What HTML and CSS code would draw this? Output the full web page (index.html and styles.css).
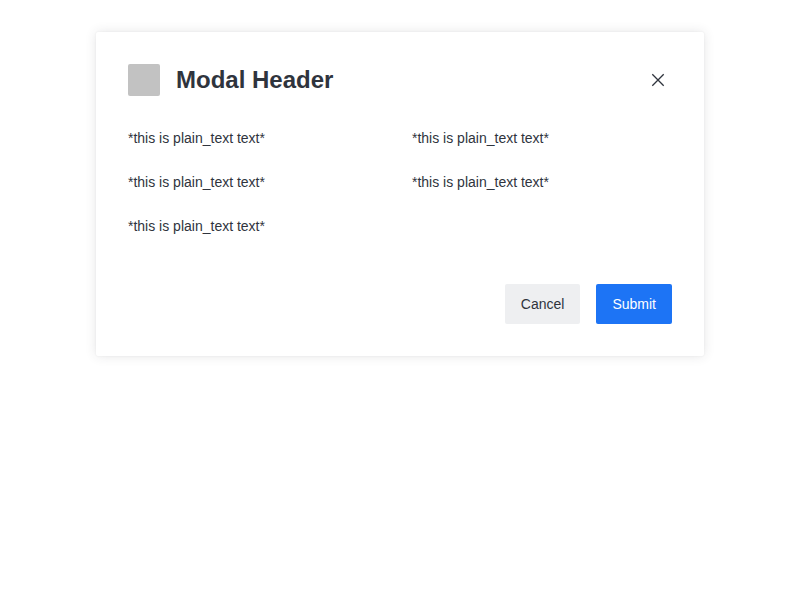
FILE: index.html
```
<!DOCTYPE html>
<html lang="en">
<head>
<meta charset="utf-8">
<title>Modal</title>
<link rel="stylesheet" href="styles.css">
</head>
<body>
<section class="modal" role="dialog" aria-labelledby="modal-title">
  <header class="modal-header">
    <span class="modal-thumb"></span>
    <h1 class="modal-title" id="modal-title">Modal Header</h1>
    <button class="modal-close" type="button" aria-label="Close">
      <svg class="icon" viewBox="0 0 28 28" aria-hidden="true"><path d="M8.3 8.3l11.4 11.4M19.7 8.3L8.3 19.7"/></svg>
    </button>
  </header>
  <div class="fields">
    <div>*this is plain_text text*</div>
    <div>*this is plain_text text*</div>
    <div>*this is plain_text text*</div>
    <div>*this is plain_text text*</div>
    <div>*this is plain_text text*</div>
  </div>
  <footer class="modal-footer">
    <button class="button" type="button">Cancel</button>
    <button class="button button-primary" type="submit">Submit</button>
  </footer>
</section>
</body>
</html>
```
FILE: styles.css
```
* {
  box-sizing: border-box;
}

body {
  margin: 0;
  padding: 32px 16px;
  background: #fff;
  color: #2f343d;
  font: 14px/20px "Liberation Sans", Arial, sans-serif;
}

.modal {
  width: 100%;
  max-width: 608px;
  margin: 0 auto;
  padding: 32px;
  border-radius: 2px;
  background: #fff;
  box-shadow: 0 0 12px rgba(47, 52, 61, 0.12), 0 0 2px rgba(47, 52, 61, 0.08);
}

.modal-header {
  display: flex;
  align-items: center;
  gap: 16px;
}

.modal-thumb {
  width: 32px;
  height: 32px;
  border-radius: 2px;
  background: #c2c2c2;
}

.modal-title {
  flex: 1;
  margin: 0;
  font-size: 24px;
  line-height: 32px;
}

.modal-close {
  display: flex;
  padding: 0;
  border: 0;
  margin: 0;
  background: none;
  color: inherit;
}

.icon {
  width: 28px;
  height: 28px;
  fill: none;
  stroke: currentColor;
  stroke-width: 1.3;
}

.fields {
  display: grid;
  grid-template-columns: 1fr 1fr;
  gap: 24px;
  margin: 32px 0 48px;
}

.modal-footer {
  display: flex;
  justify-content: flex-end;
  gap: 16px;
}

.button {
  padding: 10px 16px;
  border: 0;
  border-radius: 2px;
  background: #eeeff1;
  color: inherit;
  font: inherit;
}

.button-primary {
  background: #1d74f5;
  color: #fff;
}
```
